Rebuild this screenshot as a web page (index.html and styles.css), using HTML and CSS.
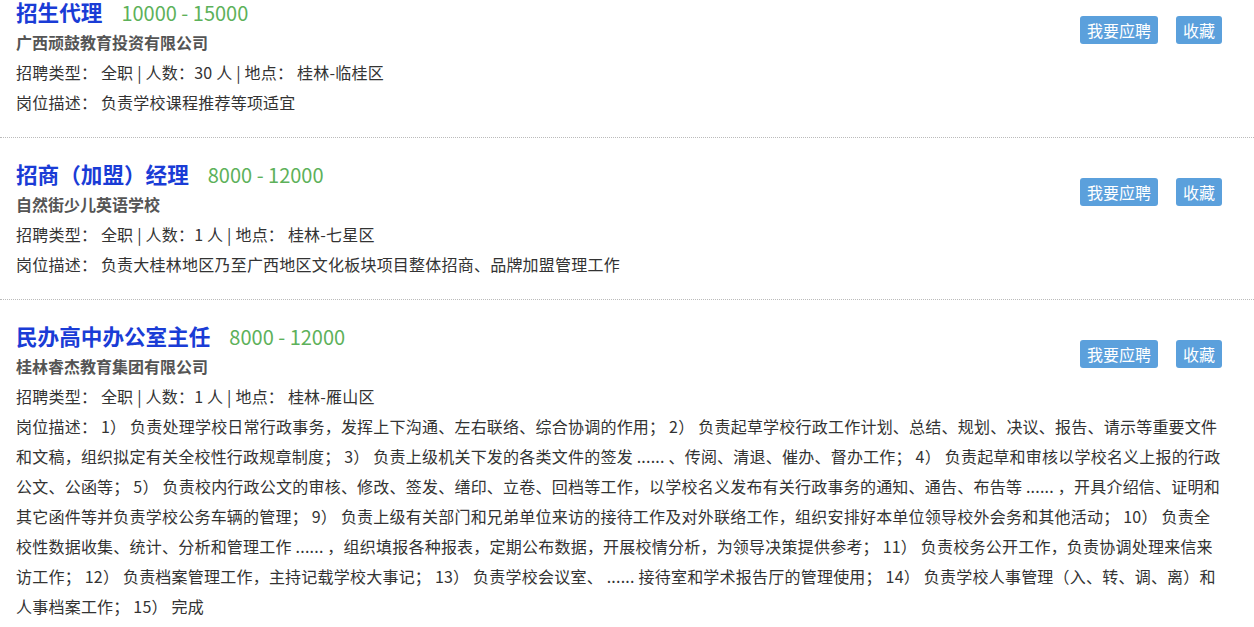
FILE: index.html
```html
<!DOCTYPE html>
<html lang="zh-CN">
<head>
    <meta charset="UTF-8">
    <meta name="viewport" content="width=device-width, initial-scale=1.0">
    <title>招聘信息</title>
    <link rel="stylesheet" href="styles.css">
</head>
<body>
    <div class="job-list">
        <div class="job-item">
            <div class="job-actions">
                <a class="btn" href="#">我要应聘</a>
                <a class="btn" href="#">收藏</a>
            </div>
            <div class="job-title"><a href="#">招生代理</a><span class="salary">10000 - 15000</span></div>
            <div class="company">广西顽鼓教育投资有限公司</div>
            <div class="meta">招聘类型： 全职 | 人数：30 人 | 地点： 桂林-临桂区</div>
            <div class="desc">岗位描述： 负责学校课程推荐等项适宜</div>
        </div>

        <div class="job-item">
            <div class="job-actions">
                <a class="btn" href="#">我要应聘</a>
                <a class="btn" href="#">收藏</a>
            </div>
            <div class="job-title"><a href="#">招商（加盟）经理</a><span class="salary">8000 - 12000</span></div>
            <div class="company">自然街少儿英语学校</div>
            <div class="meta">招聘类型： 全职 | 人数：1 人 | 地点： 桂林-七星区</div>
            <div class="desc">岗位描述： 负责大桂林地区乃至广西地区文化板块项目整体招商、品牌加盟管理工作</div>
        </div>

        <div class="job-item">
            <div class="job-actions">
                <a class="btn" href="#">我要应聘</a>
                <a class="btn" href="#">收藏</a>
            </div>
            <div class="job-title"><a href="#">民办高中办公室主任</a><span class="salary">8000 - 12000</span></div>
            <div class="company">桂林睿杰教育集团有限公司</div>
            <div class="meta">招聘类型： 全职 | 人数：1 人 | 地点： 桂林-雁山区</div>
            <div class="desc">岗位描述： 1） 负责处理学校日常行政事务，发挥上下沟通、左右联络、综合协调的作用； 2） 负责起草学校行政工作计划、总结、规划、决议、报告、请示等重要文件和文稿，组织拟定有关全校性行政规章制度； 3） 负责上级机关下发的各类文件的签发 ...... 、传阅、清退、催办、督办工作； 4） 负责起草和审核以学校名义上报的行政公文、公函等； 5） 负责校内行政公文的审核、修改、签发、缮印、立卷、回档等工作，以学校名义发布有关行政事务的通知、通告、布告等 ...... ，开具介绍信、证明和其它函件等并负责学校公务车辆的管理； 9） 负责上级有关部门和兄弟单位来访的接待工作及对外联络工作，组织安排好本单位领导校外会务和其他活动； 10） 负责全校性数据收集、统计、分析和管理工作 ...... ，组织填报各种报表，定期公布数据，开展校情分析，为领导决策提供参考； 11） 负责校务公开工作，负责协调处理来信来访工作； 12） 负责档案管理工作，主持记载学校大事记； 13） 负责学校会议室、 ...... 接待室和学术报告厅的管理使用； 14） 负责学校人事管理（入、转、调、离）和人事档案工作； 15） 完成</div>
        </div>
    </div>
</body>
</html>
```

FILE: styles.css
```css
body {
    font-family: "Microsoft YaHei", "Noto Sans CJK SC", sans-serif;
    background-color: #fff;
    color: #333;
    margin: 0;
    padding: 0;
}
.job-list {
    margin-top: -24px;
}
.job-item {
    padding: 21px 32px 20px 16px;
    border-bottom: 1px dotted #bbb;
    font-size: 16px;
    line-height: 30px;
    letter-spacing: 0.22px;
}
.job-actions {
    float: right;
    display: flex;
    gap: 18px;
    margin-top: 19px;
}
.btn {
    display: block;
    background-color: #5ba0dc;
    color: #fff;
    text-decoration: none;
    font-size: 16px;
    line-height: 28px;
    padding: 0 7px;
    border-radius: 3px;
    letter-spacing: 0;
}
.job-title {
    display: flex;
    align-items: baseline;
    height: 30px;
    letter-spacing: 0;
}
.job-title a {
    color: #1a3cd6;
    font-size: 21.6px;
    font-weight: bold;
    line-height: 30px;
    text-decoration: none;
}
.salary {
    color: #5db15a;
    font-size: 20px;
    line-height: 30px;
    margin-left: 19px;
}
.company {
    color: #555;
    font-weight: bold;
    letter-spacing: 0;
}
.meta, .desc {
    color: #333;
}
```
